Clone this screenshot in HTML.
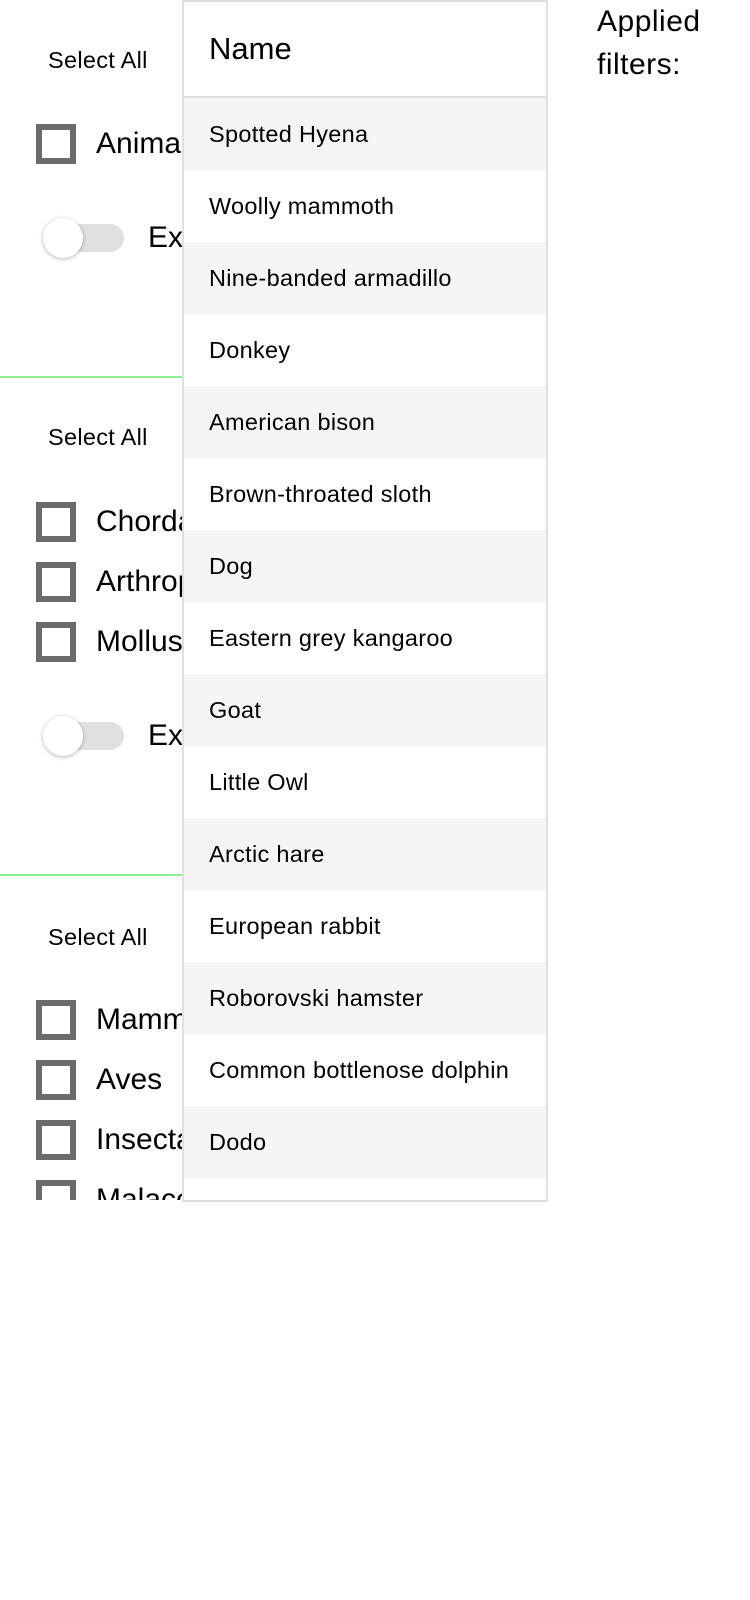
<!DOCTYPE html>
<html><head><style>
body{margin:0;width:750px;height:1600px;background:#fff;font-family:"Liberation Sans",sans-serif;position:relative;overflow:hidden;color:#000}
.left{position:absolute;left:0;top:0;width:183px;height:1200px;overflow:hidden}
.sa{position:absolute;left:48px;font-size:23.5px;line-height:24px;letter-spacing:0.3px}
.cb{position:absolute;left:36px;width:28px;height:28px;border:6px solid #6b6b6b;background:#fff}
.lb{position:absolute;left:96px;font-size:30px;line-height:34px;white-space:nowrap}
.tr{position:absolute;left:44px;width:80px;height:28px;border-radius:14px;background:#e0e0e0}
.kn{position:absolute;left:43px;width:40px;height:40px;border-radius:50%;background:#fff;box-shadow:0 1px 4px rgba(0,0,0,.3)}
.ex{position:absolute;left:148px;font-size:30px;line-height:34px}
.gl{position:absolute;left:0;width:183px;height:2px;background:#90ee90}
.panel{position:absolute;left:182px;top:0;width:362px;height:1198px;border:2px solid #e0e0e0;overflow:hidden;background:#fff}
.hd{height:94px;border-bottom:2px solid #e0e0e0;font-size:31px;line-height:94px;padding-left:25px}
.r{height:72px;line-height:72px;font-size:23.5px;letter-spacing:0.3px;padding-left:25px;white-space:nowrap}
.ap{position:absolute;left:597px;top:0;font-size:30px;line-height:43px;letter-spacing:.5px}
</style></head><body>
<div class="left">
<div class="sa" style="top:48px">Select All</div>
<div class="cb" style="top:124px"></div><div class="lb" style="top:127px">Animalia</div>
<div class="tr" style="top:224px"></div><div class="kn" style="top:218px"></div><div class="ex" style="top:221px">Extinct</div>
<div class="gl" style="top:376px"></div>
<div class="sa" style="top:425px">Select All</div>
<div class="cb" style="top:502px"></div><div class="lb" style="top:505px">Chordata</div>
<div class="cb" style="top:562px"></div><div class="lb" style="top:565px">Arthropoda</div>
<div class="cb" style="top:622px"></div><div class="lb" style="top:625px">Mollusca</div>
<div class="tr" style="top:722px"></div><div class="kn" style="top:716px"></div><div class="ex" style="top:719px">Extinct</div>
<div class="gl" style="top:874px"></div>
<div class="sa" style="top:925px">Select All</div>
<div class="cb" style="top:1000px"></div><div class="lb" style="top:1003px">Mammalia</div>
<div class="cb" style="top:1060px"></div><div class="lb" style="top:1063px">Aves</div>
<div class="cb" style="top:1120px"></div><div class="lb" style="top:1123px">Insecta</div>
<div class="cb" style="top:1180px"></div><div class="lb" style="top:1183px">Malacostraca</div>
</div>
<div class="panel">
<div class="hd">Name</div>
<div>
<div class="r" style="background:#f5f5f5">Spotted Hyena</div>
<div class="r" style="background:#fff">Woolly mammoth</div>
<div class="r" style="background:#f5f5f5">Nine-banded armadillo</div>
<div class="r" style="background:#fff">Donkey</div>
<div class="r" style="background:#f5f5f5">American bison</div>
<div class="r" style="background:#fff">Brown-throated sloth</div>
<div class="r" style="background:#f5f5f5">Dog</div>
<div class="r" style="background:#fff">Eastern grey kangaroo</div>
<div class="r" style="background:#f5f5f5">Goat</div>
<div class="r" style="background:#fff">Little Owl</div>
<div class="r" style="background:#f5f5f5">Arctic hare</div>
<div class="r" style="background:#fff">European rabbit</div>
<div class="r" style="background:#f5f5f5">Roborovski hamster</div>
<div class="r" style="background:#fff">Common bottlenose dolphin</div>
<div class="r" style="background:#f5f5f5">Dodo</div>
<div class="r" style="background:#fff"></div>
</div>
</div>
<div class="ap">Applied<br>filters:</div>
</body></html>
